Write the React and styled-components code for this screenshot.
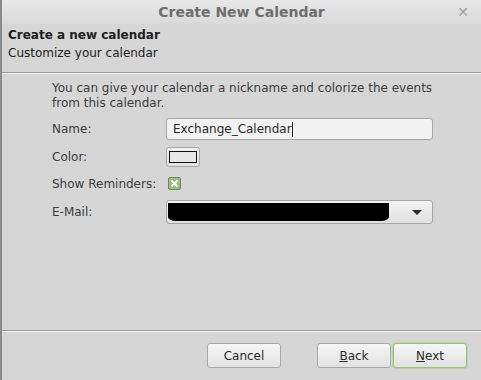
import styled, { createGlobalStyle } from "styled-components";

const Global = createGlobalStyle`
  html, body {
    margin: 0;
    padding: 0;
    background: #d6d6d6;
  }
  body {
    font-family: "DejaVu Sans", "Liberation Sans", sans-serif;
    font-size: 12px;
    color: #3c3c3c;
  }
`;

const Window = styled.div`
  width: 481px;
  height: 380px;
  display: flex;
  flex-direction: column;
  background: #d6d6d6;
  border-left: 2px solid #8a8a8a;
  box-sizing: border-box;
`;

const TitleBar = styled.div`
  height: 24px;
  flex: none;
  position: relative;
  display: flex;
  align-items: center;
  justify-content: center;
  background: linear-gradient(#e8e8e8, #dadada);
  color: #6e6e6e;
  font-weight: bold;
  font-size: 14px;
`;

const Close = styled.span`
  position: absolute;
  right: 12px;
  top: 4px;
  color: #a0a0a0;
  font-size: 14px;
`;

const Header = styled.div`
  padding: 2px 6px 10px;
  border-bottom: 1px solid #9c9c9c;
  box-shadow: 0 1px 0 #f4f4f4;
  line-height: 18px;
  color: #202020;
`;

const HeaderTitle = styled.div`
  font-weight: bold;
`;

const Body = styled.div`
  flex: 1;
  padding: 8px 48px 0 50px;
`;

const Intro = styled.p`
  margin: 0 0 7px;
  line-height: 15px;
`;

const Form = styled.div`
  display: grid;
  grid-template-columns: 114px 1fr;
  row-gap: 7px;
  align-items: center;
`;

const Label = styled.div``;

const TextInput = styled.div`
  height: 22px;
  box-sizing: border-box;
  border: 1px solid #a8a8a8;
  border-radius: 3px;
  background: #f2f2f2;
  padding: 0 6px;
  display: flex;
  align-items: center;
  font-size: 12px;
  color: #2a2a2a;
`;

const Caret = styled.span`
  width: 1px;
  height: 15px;
  background: #222;
`;

const ColorButton = styled.div`
  width: 34px;
  height: 20px;
  box-sizing: border-box;
  border: 1px solid #a6a6a6;
  border-radius: 3px;
  background: linear-gradient(#f2f2f2, #e2e2e2);
  display: flex;
  align-items: center;
  justify-content: center;
`;

const Swatch = styled.span`
  width: 26px;
  height: 10px;
  border: 1px solid #111;
  background: #e8e8e8;
`;

const Check = styled.div`
  width: 13px;
  height: 13px;
  margin: 3px 0 3px 2px;
  box-sizing: border-box;
  border: 1px solid #6e8a58;
  border-radius: 2px;
  background: #9cbb7c;
  display: flex;
  align-items: center;
  justify-content: center;
`;

const Select = styled.div`
  height: 24px;
  box-sizing: border-box;
  border: 1px solid #a6a6a6;
  border-radius: 3px;
  background: linear-gradient(#f4f4f4, #e0e0e0);
  display: flex;
  align-items: center;
  padding: 2px 10px 2px 1px;
  gap: 8px;
`;

const Redacted = styled.div`
  flex: 0 0 221px;
  height: 18px;
  background: #000;
  border-radius: 0 0 8px 8px / 0 0 4px 4px;
`;

const Arrow = styled.span`
  margin-left: auto;
  width: 0;
  height: 0;
  border-left: 5px solid transparent;
  border-right: 5px solid transparent;
  border-top: 5px solid #2a2a2a;
`;

const Footer = styled.div`
  flex: none;
  height: 49px;
  border-top: 1px solid #9a9a9a;
  box-shadow: inset 0 1px 0 #f6f6f6;
  display: flex;
  align-items: center;
  padding: 0 13px 0 205px;
`;

const Button = styled.button`
  width: 74px;
  height: 25px;
  margin-right: ${(p) => p.$gap || 0}px;
  box-sizing: border-box;
  border: 1px solid ${(p) => (p.$default ? "#9cc17e" : "#a8a8a8")};
  box-shadow: ${(p) => (p.$default ? "0 0 0 1px #b9d6a0" : "none")};
  border-radius: 3px;
  background: linear-gradient(#f6f6f6, #e2e2e2);
  font-family: inherit;
  font-size: 12px;
  color: #2a2a2a;
  padding: 0;
`;

export default function App() {
  return (
    <>
      <Global />
      <Window>
        <TitleBar>
          Create New Calendar
          <Close>✕</Close>
        </TitleBar>
        <Header>
          <HeaderTitle>Create a new calendar</HeaderTitle>
          <div>Customize your calendar</div>
        </Header>
        <Body>
          <Intro>
            You can give your calendar a nickname and colorize the events
            from this calendar.
          </Intro>
          <Form>
            <Label>Name:</Label>
            <TextInput>
              Exchange_Calendar
              <Caret />
            </TextInput>
            <Label>Color:</Label>
            <ColorButton>
              <Swatch />
            </ColorButton>
            <Label>Show Reminders:</Label>
            <Check>
              <svg width="9" height="9" viewBox="0 0 9 9">
                <path d="M1.5 1.5 L7.5 7.5 M7.5 1.5 L1.5 7.5" stroke="#fff" strokeWidth="2" />
              </svg>
            </Check>
            <Label>E-Mail:</Label>
            <Select>
              <Redacted />
              <Arrow />
            </Select>
          </Form>
        </Body>
        <Footer>
          <Button $gap={36}>Cancel</Button>
          <Button $gap={2}>
            <u>B</u>ack
          </Button>
          <Button $default>
            <u>N</u>ext
          </Button>
        </Footer>
      </Window>
    </>
  );
}
